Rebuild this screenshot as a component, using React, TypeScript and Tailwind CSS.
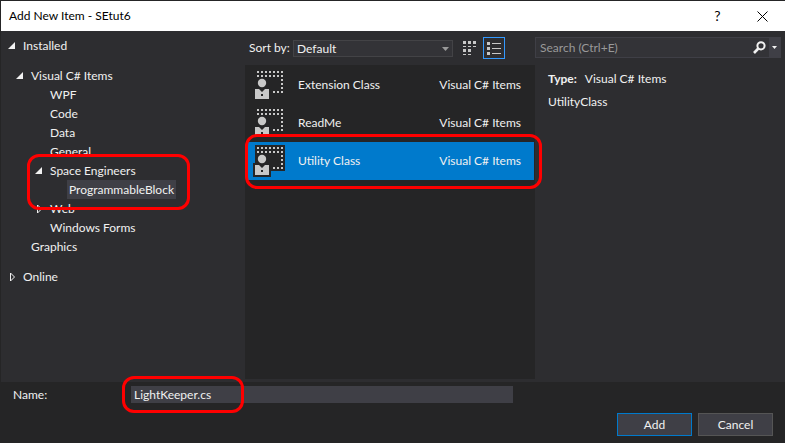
import { useState, type ReactNode } from "react";

function Highlight({ className }: { className: string }) {
  return (
    <span
      aria-hidden="true"
      className={`pointer-events-none absolute z-10 border-[3px] border-[#ff0000] ${className}`}
    />
  );
}

function Expanded() {
  return (
    <svg width="8" height="8" viewBox="0 0 8 8" aria-hidden="true">
      <path d="M7 0v7H0z" fill="#f1f1f1" />
    </svg>
  );
}

function Collapsed() {
  return (
    <svg width="8" height="10" viewBox="0 0 8 10" aria-hidden="true">
      <path d="M2.500 1v8L6.500 5z" fill="none" stroke="#f1f1f1" />
    </svg>
  );
}

type RowProps = {
  label: string;
  indent: string;
  arrow?: "open" | "closed";
  selected?: boolean;
  children?: ReactNode;
};

function TreeRow({ label, indent, arrow, selected, children }: RowProps) {
  return (
    <li role="treeitem" aria-selected={!!selected} className={`relative flex h-[19px] items-center ${indent}`}>
      <span className="flex w-[13px] shrink-0">
        {arrow === "open" && <Expanded />}
        {arrow === "closed" && <Collapsed />}
      </span>
      <span className={`h-[19px] px-0.5 leading-5 ${selected ? "bg-[#3f3f46]" : ""}`}>{label}</span>
      {children}
    </li>
  );
}

const dots: [number, number][] = [
  ...[3, 7].flatMap((y) => [4, 8, 12, 16, 20, 24, 28].map((x): [number, number] => [x, y])),
  [28, 11],
  [28, 15],
  [28, 19],
  [28, 23],
  [24, 23],
  [20, 23],
];

function ClassIcon() {
  return (
    <svg width="34" height="34" viewBox="0 0 34 34" aria-hidden="true" className="shrink-0">
      <path d="M2 1h30v26H18v6H0V19h2z" fill="#252526" />
      {dots.map(([x, y]) => (
        <rect key={`${x}-${y}`} x={x} y={y} width="2" height="2" fill="#c8c8c8" />
      ))}
      <circle cx="9" cy="15" r="4.2" fill="#c8c8c8" />
      <path d="M2 21h4l3 3 3-3h4v10H2z" fill="#c8c8c8" />
      <rect x="8" y="26" width="2" height="2" fill="#252526" />
    </svg>
  );
}

const items = ["Extension Class", "ReadMe", "Utility Class"];

export default function App() {
  const [name, setName] = useState("LightKeeper.cs");
  const [chosen, setChosen] = useState("Utility Class");

  return (
    <div className="flex min-h-screen flex-col border-l border-t border-[#252526] bg-[#252526] font-['Lato','Open_Sans',sans-serif] text-xs text-[#f1f1f1]">
      <header className="flex h-[30px] items-center bg-white pl-2 text-black">
        <h1 className="flex-1">Add New Item - SEtut6</h1>
        <button aria-label="Help" className="h-[30px] w-[45px] text-sm">?</button>
        <button aria-label="Close" className="flex h-[30px] w-[45px] items-center justify-center">
          <svg width="11" height="11" viewBox="0 0 11 11" aria-hidden="true">
            <path d="M.5.5l10 10M10.500.5l-10 10" stroke="#000" fill="none" />
          </svg>
        </button>
      </header>

      <main className="grid flex-1 grid-cols-[244px_minmax(0,1fr)_250px] bg-[#2d2d30]">
        <nav aria-label="Categories" className="pt-[5px]">
          <ul role="tree" className="flex flex-col">
            <TreeRow label="Installed" indent="pl-[7px]" arrow="open" />
            <li className="h-[11px]" role="presentation" />
            <TreeRow label="Visual C# Items" indent="pl-[15px]" arrow="open" />
            <TreeRow label="WPF" indent="pl-[34px]" />
            <TreeRow label="Code" indent="pl-[34px]" />
            <TreeRow label="Data" indent="pl-[34px]" />
            <TreeRow label="General" indent="pl-[34px]" />
            <TreeRow label="Space Engineers" indent="pl-[34px]" arrow="open">
              <Highlight className="-top-[7px] left-[26px] h-14 w-[163px] rounded-xl" />
            </TreeRow>
            <TreeRow label="ProgrammableBlock" indent="pl-[53px]" selected />
            <TreeRow label="Web" indent="pl-[34px]" arrow="closed" />
            <TreeRow label="Windows Forms" indent="pl-[34px]" />
            <TreeRow label="Graphics" indent="pl-[15px]" />
            <li className="h-[11px]" role="presentation" />
            <TreeRow label="Online" indent="pl-[7px]" arrow="closed" />
          </ul>
        </nav>

        <section className="flex flex-col pb-[3px]">
          <div className="flex h-[34px] items-center pl-1">
            <label htmlFor="sort" className="w-11 shrink-0">Sort by:</label>
            <div className="relative flex-1">
              <select
                id="sort"
                className="block h-[17px] w-full appearance-none border border-[#434346] bg-[#333337] pl-[3px] leading-[15px]"
              >
                <option>Default</option>
              </select>
              <svg width="7" height="4" viewBox="0 0 7 4" aria-hidden="true" className="pointer-events-none absolute right-1 top-[7px]">
                <path d="M0 0h7L3.500 4z" fill="#999" />
              </svg>
            </div>
            <button aria-label="Small icons" className="flex h-[22px] w-[30px] items-center justify-end pr-[7px]">
              <svg width="13" height="14" viewBox="0 0 13 14" aria-hidden="true" fill="#c8c8c8">
                <path d="M0 0h3v3H0zM5 0h3v3H5zM10 0h3v3h-3zM0 5h3v1H0zM5 5h3v1H5zM10 5h3v1h-3zM0 8h3v3H0zM5 8h3v3H5zM0 13h3v1H0zM5 13h3v1H5z" />
              </svg>
            </button>
            <button aria-label="List" className="mr-[30px] flex h-[22px] w-[22px] items-center justify-center border border-[#3399ff]">
              <svg width="14" height="13" viewBox="0 0 14 13" aria-hidden="true" fill="#c8c8c8">
                <path d="M0 0h3v3H0zM0 5h3v3H0zM0 10h3v3H0zM5 1h9v1H5zM5 6h9v1H5zM5 11h9v1H5z" />
              </svg>
            </button>
          </div>
          <div role="listbox" aria-label="Templates" className="flex-1 bg-[#252526] pl-[3px] pr-px pt-px">
            {items.map((item) => (
              <div key={item} className="relative">
                <button
                  role="option"
                  aria-selected={item === chosen}
                  onClick={() => setChosen(item)}
                  className={`flex h-[38px] w-full items-center pl-[5px] pr-[13px] text-left ${item === chosen ? "bg-[#007acc]" : ""}`}
                >
                  <ClassIcon />
                  <span className="flex-1 pl-[11px]">{item}</span>
                  <span>Visual C# Items</span>
                </button>
                {item === chosen && <Highlight className="-left-[3px] -right-2 -top-2 h-[55px] rounded-xl" />}
              </div>
            ))}
          </div>
        </section>

        <aside className="pr-1 pt-1.5">
          <div className="flex h-[21px] items-center border border-[#3f3f46] bg-[#333337]">
            <input
              type="search"
              aria-label="Search"
              placeholder="Search (Ctrl+E)"
              className="min-w-0 flex-1 bg-transparent pl-1 outline-none placeholder:text-[#999999]"
            />
            <button aria-label="Search" className="pr-[3px]">
              <svg width="13" height="13" viewBox="0 0 13 13" aria-hidden="true" fill="none" stroke="#f1f1f1">
                <circle cx="8" cy="4.800" r="3.600" strokeWidth="2" />
                <path d="M5.300 7.500L1 12" strokeWidth="2.600" />
              </svg>
            </button>
            <button aria-label="Search options" className="flex h-[19px] w-[11px] items-center justify-center bg-[#3f3f46]">
              <svg width="5" height="3" viewBox="0 0 5 3" aria-hidden="true">
                <path d="M0 0h5L2.500 3z" fill="#f1f1f1" />
              </svg>
            </button>
          </div>
          <div className="flex flex-col gap-[7px] pl-[13px] pt-[13px]">
            <p className="flex gap-2">
              <strong className="font-bold">Type:</strong>
              <span>Visual C# Items</span>
            </p>
            <p>UtilityClass</p>
          </div>
        </aside>
      </main>

      <footer className="h-[61px] pl-3 pr-3 pt-1">
        <div className="flex items-center">
          <label htmlFor="name" className="w-[118px] shrink-0">Name:</label>
          <div className="relative mr-[260px] flex-1">
            <input
              id="name"
              value={name}
              onChange={(e) => setName(e.target.value)}
              className="block h-[17px] w-full bg-[#3f3f46] pl-[3px] outline-none"
            />
            <Highlight className="-left-[9px] -top-2.5 h-[37px] w-[122px] rounded-xl" />
          </div>
        </div>
        <div className="flex justify-end gap-1.5 pt-2.5">
          <button className="h-[23px] w-[75px] border border-[#007acc] bg-[#3f3f46]">Add</button>
          <button className="h-[23px] w-[75px] border border-[#555555] bg-[#3f3f46]">Cancel</button>
        </div>
      </footer>
    </div>
  );
}
